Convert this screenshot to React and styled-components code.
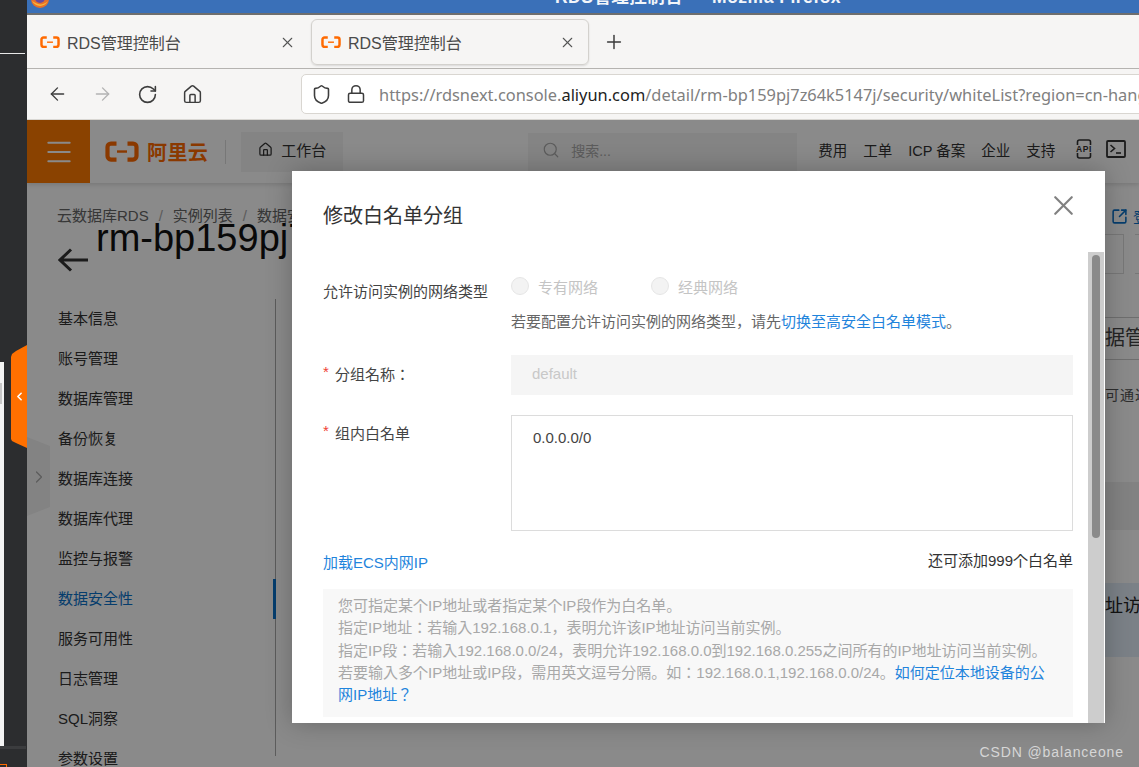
import styled, { createGlobalStyle } from "styled-components";
import {
  ArrowLeft,
  ArrowRight,
  ChevronLeft,
  ChevronRight,
  Home,
  Lock,
  Menu,
  Plus,
  RotateCw,
  Search,
  Shield,
  SquareArrowOutUpRight,
  X,
} from "lucide-react";

const GlobalStyle = createGlobalStyle`
  html, body {
    margin: 0;
    padding: 0;
    background: #2c2d2f;
    overflow: hidden;
  }
  * {
    box-sizing: border-box;
  }
  body {
    font-family: "Liberation Sans", "Noto Sans CJK JP", sans-serif;
  }
`;

const Screen = styled.div`
  position: relative;
  display: flex;
  width: 1139px;
  height: 767px;
  overflow: hidden;
`;

/* desktop strip left of the browser */
const DesktopStrip = styled.div`
  position: relative;
  width: 27px;
  flex: none;
  background: #2c2d2f;
`;

const StripLine = styled.div`
  position: absolute;
  left: 0;
  top: 53px;
  width: 25px;
  height: 1px;
  background: #e8e8e8;
`;

const StripPanel = styled.div`
  position: absolute;
  left: 0;
  top: 362px;
  width: 4px;
  height: 384px;
  background: #f4f4f4;
`;

const StripPanelMark = styled.div`
  position: absolute;
  left: 0;
  top: 21px;
  width: 2px;
  height: 21px;
  background: #c8c8c8;
`;

const StripFoot = styled.div`
  position: absolute;
  left: 0;
  top: 746px;
  width: 26px;
  height: 3px;
  background: #3b3c3e;
`;

const StripBadge = styled.div`
  position: absolute;
  left: -3px;
  top: 764px;
  width: 10px;
  height: 10px;
  border: 1px solid #ff6a00;
`;

const Browser = styled.div`
  flex: 1;
  min-width: 0;
  display: flex;
  flex-direction: column;
`;

const TitleBar = styled.div`
  position: relative;
  height: 15px;
  flex: none;
  display: flex;
  justify-content: center;
  align-items: flex-end;
  background: #3a70b8;
  border-bottom: 2px solid #6e6e6e;
  overflow: hidden;
`;

const TitleText = styled.div`
  height: 20px;
  line-height: 20px;
  margin-left: 230px;
  margin-bottom: 6px;
  flex: none;
  font-size: 17.5px;
  font-weight: 700;
  color: #f2f5fa;
  letter-spacing: 0.5px;
  white-space: nowrap;
`;

const FoxIcon = styled.svg`
  position: absolute;
  left: 4px;
  top: -10px;
`;

const TabBar = styled.div`
  height: 54px;
  flex: none;
  display: flex;
  align-items: center;
  background: #f6f5f4;
  border-bottom: 1px solid #b5b3b0;
`;

const Tab = styled.div`
  width: ${(p) => p.$width}px;
  height: 46px;
  margin-top: 1px;
  flex: none;
  display: flex;
  align-items: center;
  padding-left: ${(p) => p.$left}px;
  padding-right: ${(p) => p.$right}px;
  border-radius: 6px;
  border: 1px solid ${(p) => (p.$active ? "#d3d1cd" : "transparent")};
  box-shadow: ${(p) => (p.$active ? "0 1px 2px rgba(0,0,0,.12)" : "none")};
`;

const TabTitle = styled.span`
  flex: 1;
  margin-left: 7px;
  font-size: 16px;
  color: #4a4a4a;
  white-space: nowrap;
`;

const TabClose = styled(X)`
  color: #555;
`;

const NewTab = styled(Plus)`
  margin-left: 14px;
  color: #3a3a3a;
`;

const NavBar = styled.div`
  height: 51px;
  flex: none;
  display: flex;
  align-items: center;
  padding-left: 20px;
  background: #f6f5f4;
  border-bottom: 1px solid #d9d7d3;
  overflow: hidden;
`;

const NavButton = styled.div`
  width: 21px;
  height: 24px;
  margin-right: ${(p) => p.$gap || 24}px;
  flex: none;
  display: flex;
  align-items: center;
  justify-content: center;
  color: ${(p) => (p.$disabled ? "#b3b3b3" : "#3d3d3d")};
`;

const AddressBox = styled.div`
  width: 900px;
  height: 40px;
  margin-left: 74px;
  flex: none;
  display: flex;
  align-items: center;
  padding-left: 9px;
  background: #fff;
  border: 1px solid #d9d6d1;
  border-radius: 5px;
  color: #3d3d3d;
`;

const LockIcon = styled(Lock)`
  margin-left: 14px;
  margin-right: 13px;
  flex: none;
`;

const Url = styled.span`
  font-family: "Noto Sans", sans-serif;
  font-size: 16.4px;
  color: #808080;
  white-space: nowrap;
  b {
    font-weight: 400;
    color: #222;
  }
`;

const Page = styled.div`
  position: relative;
  flex: 1;
  min-height: 0;
  display: flex;
  flex-direction: column;
  background: #fff;
  overflow: hidden;
`;

const ConsoleBar = styled.div`
  height: 63px;
  flex: none;
  display: flex;
  align-items: center;
  background: #fff;
  box-shadow: 0 2px 4px rgba(0, 0, 0, 0.12);
`;

const MenuButton = styled.div`
  width: 63px;
  height: 63px;
  flex: none;
  display: flex;
  align-items: center;
  justify-content: center;
  background: #ff7a00;
  color: #fff;
`;

const Brand = styled.div`
  margin-left: 15px;
  display: flex;
  align-items: center;
  gap: 8px;
  color: #ff6a00;
`;

const BrandName = styled.span`
  font-size: 20px;
  font-weight: 700;
  letter-spacing: 0.4px;
`;

const BarDivider = styled.div`
  width: 1px;
  height: 24px;
  margin-left: 17px;
  background: #ddd;
`;

const Workbench = styled.div`
  width: 102px;
  height: 40px;
  margin-left: 15px;
  display: flex;
  align-items: center;
  justify-content: center;
  gap: 8px;
  padding: 0 0 4px 0;
  background: #f4f4f4;
  font-size: 15px;
  color: #333;
`;

const SearchBox = styled.div`
  width: 269px;
  height: 38px;
  margin-left: 185px;
  display: flex;
  align-items: center;
  padding: 0 0 3px 14px;
  gap: 11px;
  background: #f4f4f4;
  font-size: 14px;
  color: #aaa;
`;

const BarLinks = styled.div`
  margin-left: 21px;
  margin-bottom: 5px;
  display: flex;
  align-items: center;
  gap: 16px;
  font-size: 14.5px;
  color: #333;
  white-space: nowrap;
`;

const BarIcons = styled.div`
  margin-left: 3px;
  display: flex;
  align-items: center;
  gap: 12px;
`;

const Content = styled.div`
  flex: 1;
  min-height: 0;
  display: flex;
  padding-left: 30px;
`;

const SideColumn = styled.div`
  width: 219px;
  flex: none;
`;

const Breadcrumb = styled.div`
  margin-top: 24px;
  height: 18px;
  line-height: 18px;
  font-size: 15px;
  color: #666;
  white-space: nowrap;
  span {
    margin: 0 10px;
    color: #aaa;
  }
`;

const Heading = styled.div`
  display: flex;
  align-items: flex-start;
  height: 74px;
`;

const BackArrow = styled.svg`
  margin-top: 23px;
  margin-left: 1px;
  flex: none;
  color: #333;
`;

const InstanceName = styled.div`
  margin-left: 8px;
  margin-top: -9px;
  width: 260px;
  font-size: 38px;
  line-height: 44px;
  color: #111;
  white-space: nowrap;
`;

const SideMenu = styled.div`
  position: relative;
  width: 219px;
  height: 457px;
  padding-top: 0;
  border-right: 1px solid #aaa;
`;

const SideItem = styled.div`
  position: relative;
  height: 40px;
  line-height: 40px;
  padding-left: 1px;
  font-size: 15px;
  color: ${(p) => (p.$active ? "#0a72c9" : "#333")};
  white-space: nowrap;
  &::after {
    content: "";
    display: ${(p) => (p.$active ? "block" : "none")};
    position: absolute;
    right: -1px;
    top: 0;
    width: 3px;
    height: 40px;
    background: #0a72c9;
  }
`;

const MainColumn = styled.div`
  flex: 1;
  min-width: 0;
  overflow: hidden;
  display: flex;
  flex-direction: column;
  align-items: flex-end;
`;

const OpenLink = styled.div`
  margin-top: 24px;
  width: 28px;
  height: 18px;
  display: flex;
  align-items: center;
  gap: 5px;
  color: #0a72c9;
  font-size: 14px;
  overflow: hidden;
  white-space: nowrap;
`;

const StatRow = styled.div`
  margin-top: 9px;
  width: 34px;
  display: flex;
  gap: 11px;
  overflow: hidden;
`;

const StatBox = styled.div`
  width: 19px;
  height: 40px;
  flex: none;
  border: 1px solid #ddd;
  border-left: none;
`;

const TabStrip = styled.div`
  margin-top: 43px;
  width: 34px;
  height: 43px;
  line-height: 41px;
  border-top: 1px solid #ccc;
  border-bottom: 1px solid #ccc;
  font-size: 20px;
  color: #444;
  overflow: hidden;
  white-space: nowrap;
`;

const TabNote = styled.div`
  margin-top: 25px;
  width: 34px;
  font-size: 14px;
  line-height: 20px;
  letter-spacing: 1px;
  color: #555;
  overflow: hidden;
  white-space: nowrap;
`;

const GreyBand = styled.div`
  margin-top: 77px;
  width: 34px;
  height: 48px;
  background: #f0f0f0;
`;

const BlueBand = styled.div`
  margin-top: 53px;
  width: 34px;
  height: 74px;
  padding-top: 12px;
  background: #e4eefa;
  font-size: 18px;
  line-height: 22px;
  color: #222;
  overflow: hidden;
  white-space: nowrap;
`;

const OrangeTab = styled.div`
  position: absolute;
  left: 11px;
  top: 345px;
  width: 16px;
  height: 103px;
  z-index: 5;
  display: flex;
  align-items: center;
  justify-content: center;
  background: #ff7000;
  clip-path: polygon(0 12px, 1px 9px, 5px 6px, 100% 0, 100% 100%, 5px 98px, 1px 96px, 0 94px);
  color: #fff;
`;

const FoldTab = styled.div`
  position: absolute;
  left: 27px;
  top: 437px;
  width: 23px;
  height: 79px;
  z-index: 1;
  display: flex;
  align-items: center;
  justify-content: center;
  background: #f2f2f2;
  clip-path: polygon(0 0, 100% 9px, 100% 70px, 0 100%);
  color: #aaa;
`;

const Mask = styled.div`
  position: absolute;
  inset: 0;
  z-index: 2;
  background: rgba(0, 0, 0, 0.46);
`;

const Modal = styled.div`
  position: absolute;
  left: 265px;
  top: 51px;
  z-index: 3;
  width: 813px;
  height: 552px;
  display: flex;
  flex-direction: column;
  background: #fff;
  box-shadow: 0 0 24px rgba(0, 0, 0, 0.25);
`;

const ModalHeader = styled.div`
  height: 81px;
  flex: none;
  display: flex;
  justify-content: space-between;
  padding: 33px 25px 0 31px;
`;

const ModalTitle = styled.div`
  font-size: 20px;
  line-height: 24px;
  color: #333;
`;

const ModalClose = styled(X)`
  margin-top: -15px;
  color: #808080;
`;

const ModalBody = styled.div`
  flex: 1;
  min-height: 0;
  display: flex;
  padding-right: 1px;
`;

const Scroller = styled.div`
  flex: 1;
  min-width: 0;
  padding: 0 15px 0 31px;
  overflow: hidden;
`;

const Track = styled.div`
  width: 16px;
  flex: none;
  padding: 3px 4px 0;
  background: #cdcdcd;
`;

const Thumb = styled.div`
  height: 283px;
  border-radius: 4px;
  background: #8a8a8a;
`;

const FormRow = styled.div`
  display: grid;
  grid-template-columns: 188px 1fr;
  margin-bottom: ${(p) => p.$gap || 0}px;
`;

const Label = styled.div`
  font-size: 15px;
  line-height: 20px;
  padding-top: ${(p) => p.$top || 0}px;
  color: #444;
  white-space: nowrap;
  i {
    font-style: normal;
    display: inline-block;
    width: 12px;
    line-height: 1;
    vertical-align: 3px;
    color: #f04134;
  }
`;

const RadioRow = styled.div`
  display: flex;
  align-items: center;
  height: 20px;
  margin-top: 24px;
`;

const RadioOption = styled.div`
  width: 140px;
  display: flex;
  align-items: center;
  gap: 9px;
  font-size: 15px;
  color: #c4c4c4;
  white-space: nowrap;
`;

const RadioDot = styled.span`
  width: 18px;
  height: 18px;
  flex: none;
  border-radius: 50%;
  background: #f3f3f3;
  border: 1px solid #e6e6e6;
`;

const Hint = styled.div`
  margin-top: 16px;
  font-size: 15px;
  line-height: 20px;
  color: #666;
  white-space: nowrap;
`;

const BlueLink = styled.a`
  color: #1f84dc;
`;

const ReadonlyInput = styled.div`
  height: 40px;
  padding-left: 21px;
  line-height: 38px;
  background: #f5f5f5;
  font-size: 15px;
  color: #c8c8c8;
`;

const IpArea = styled.div`
  height: 116px;
  padding: 13px 21px;
  border: 1px solid #dcdcdc;
  font-size: 15px;
  line-height: 18px;
  color: #444;
`;

const AreaFoot = styled.div`
  display: flex;
  justify-content: space-between;
  align-items: center;
  margin-top: 22px;
  height: 20px;
  font-size: 15px;
  line-height: 20px;
  white-space: nowrap;
`;

const RemainText = styled.span`
  margin-top: -4px;
  font-size: 15px;
  color: #333;
`;

const NoteBox = styled.div`
  margin-top: 16px;
  padding: 6px 15px 11px;
  background: #f8f8f8;
  font-size: 15px;
  line-height: 22.3px;
  color: #a8a8a8;
`;

const Watermark = styled.div`
  position: absolute;
  right: 15px;
  bottom: 6px;
  z-index: 6;
  font-size: 14px;
  line-height: 18px;
  letter-spacing: 0.9px;
  color: #d6d6d6;
`;

const AliMark = ({ size = 20, color = "#ff6a00" }) => (
  <svg width={size} height={size * 0.62} viewBox="0 0 34 21" fill="none" style={{ flex: "none" }}>
    <path
      d="M11.500 2.500H6C4 2.500 2.500 4 2.500 6v9c0 2 1.500 3.500 3.500 3.500h5.500M22.500 2.500H28c2 0 3.500 1.500 3.500 3.500v9c0 2-1.500 3.500-3.500 3.500h-5.500"
      stroke={color}
      strokeWidth="4.200"
    />
    <path d="M12 10.500h10" stroke={color} strokeWidth="2.400" />
  </svg>
);

const ApiIcon = () => (
  <svg width="20" height="20" viewBox="0 0 20 20" fill="none">
    <path
      d="M3.500 6V3C3.500 1.800 4.300 1 5.500 1h9c1.200 0 2 .8 2 2v3M3.500 14v3c0 1.200.8 2 2 2h9c1.200 0 2-.8 2-2v-3"
      stroke="#333"
      strokeWidth="1.600"
    />
    <text x="10" y="13" textAnchor="middle" fontSize="8.500" fontWeight="700" letterSpacing="0.6" fill="#333" fontFamily="Liberation Sans">
      API
    </text>
  </svg>
);

const TerminalIcon = () => (
  <svg width="20" height="18" viewBox="0 0 20 18" fill="none" stroke="#333">
    <rect x="1" y="1" width="18" height="16" rx="1" strokeWidth="1.800" />
    <path d="M4.500 5l4 3.500-4 3.500" strokeWidth="1.600" />
    <path d="M10 13h5" strokeWidth="1.600" />
  </svg>
);

const menuItems = [
  "基本信息",
  "账号管理",
  "数据库管理",
  "备份恢复",
  "数据库连接",
  "数据库代理",
  "监控与报警",
  "数据安全性",
  "服务可用性",
  "日志管理",
  "SQL洞察",
  "参数设置",
];

export default function App() {
  return (
    <Screen>
      <GlobalStyle />
      <DesktopStrip>
        <StripLine />
        <StripPanel>
          <StripPanelMark />
        </StripPanel>
        <StripFoot />
        <StripBadge />
      </DesktopStrip>

      <Browser>
        <TitleBar>
          <FoxIcon width="18" height="18" viewBox="0 0 18 18">
            <circle cx="9" cy="9" r="9" fill="#e8702a" />
            <circle cx="9" cy="8" r="5" fill="#6a4a9c" />
            <path d="M1 11c3 6 12 7 16 0-3 3-7 4-10 3-3-1-4-2-6-3z" fill="#f6b73c" />
          </FoxIcon>
          <TitleText>RDS管理控制台 — Mozilla Firefox</TitleText>
        </TitleBar>

        <TabBar>
          <Tab $width={284} $left={12} $right={14}>
            <AliMark size={20} />
            <TabTitle>RDS管理控制台</TabTitle>
            <TabClose size={17} strokeWidth={1.5} />
          </Tab>
          <Tab $active $width={278} $left={9} $right={12}>
            <AliMark size={20} />
            <TabTitle>RDS管理控制台</TabTitle>
            <TabClose size={17} strokeWidth={1.5} />
          </Tab>
          <NewTab size={22} strokeWidth={1.6} />
        </TabBar>

        <NavBar>
          <NavButton>
            <ArrowLeft size={22} strokeWidth={1.6} />
          </NavButton>
          <NavButton $disabled>
            <ArrowRight size={22} strokeWidth={1.6} />
          </NavButton>
          <NavButton>
            <RotateCw size={21} strokeWidth={1.8} />
          </NavButton>
          <NavButton $gap={24}>
            <Home size={21} strokeWidth={1.7} />
          </NavButton>
          <AddressBox>
            <Shield size={21} strokeWidth={1.8} />
            <LockIcon size={20} strokeWidth={1.8} />
            <Url>
              https://rdsnext.console.<b>aliyun.com</b>/detail/rm-bp159pj7z64k5147j/security/whiteList?region=cn-hangzhou
            </Url>
          </AddressBox>
        </NavBar>

        <Page>
          <ConsoleBar>
            <MenuButton>
              <Menu size={32} strokeWidth={1.5} />
            </MenuButton>
            <Brand>
              <AliMark size={34} />
              <BrandName>阿里云</BrandName>
            </Brand>
            <BarDivider />
            <Workbench>
              <Home size={15} strokeWidth={2} />
              工作台
            </Workbench>
            <SearchBox>
              <Search size={18} strokeWidth={1.6} />
              搜索...
            </SearchBox>
            <BarLinks>
              <span>费用</span>
              <span>工单</span>
              <span>ICP 备案</span>
              <span>企业</span>
              <span>支持</span>
              <BarIcons>
                <ApiIcon />
                <TerminalIcon />
              </BarIcons>
            </BarLinks>
          </ConsoleBar>

          <Content>
            <SideColumn>
              <Breadcrumb>
                云数据库RDS<span>/</span>实例列表<span>/</span>数据安全性
              </Breadcrumb>
              <Heading>
                <BackArrow width="30" height="24" viewBox="0 0 30 24" fill="none" stroke="currentColor" strokeWidth="3">
                  <path d="M30 12H2M13 1.500 2 12l11 10.500" />
                </BackArrow>
                <InstanceName>rm-bp159pj7z64k5147j</InstanceName>
              </Heading>
              <SideMenu>
                {menuItems.map((item) => (
                  <SideItem key={item} $active={item === "数据安全性"}>
                    {item}
                  </SideItem>
                ))}
              </SideMenu>
            </SideColumn>
            <MainColumn>
              <OpenLink>
                <SquareArrowOutUpRight size={17} strokeWidth={2.2} style={{ flex: "none" }} />
                登录数据库
              </OpenLink>
              <StatRow>
                <StatBox />
                <StatBox />
              </StatRow>
              <TabStrip>据管理</TabStrip>
              <TabNote>可通过</TabNote>
              <GreyBand />
              <BlueBand>址访问</BlueBand>
            </MainColumn>
          </Content>

          <Mask />

          <Modal>
            <ModalHeader>
              <ModalTitle>修改白名单分组</ModalTitle>
              <ModalClose size={33} strokeWidth={1.6} />
            </ModalHeader>
            <ModalBody>
              <Scroller>
                <FormRow $gap={23}>
                  <Label $top={30}>允许访问实例的网络类型</Label>
                  <div>
                    <RadioRow>
                      <RadioOption>
                        <RadioDot />
                        专有网络
                      </RadioOption>
                      <RadioOption>
                        <RadioDot />
                        经典网络
                      </RadioOption>
                    </RadioRow>
                    <Hint>
                      若要配置允许访问实例的网络类型，请先<BlueLink>切换至高安全白名单模式</BlueLink>。
                    </Hint>
                  </div>
                </FormRow>
                <FormRow $gap={20}>
                  <Label $top={9}>
                    <i>*</i>分组名称：
                  </Label>
                  <ReadonlyInput>default</ReadonlyInput>
                </FormRow>
                <FormRow>
                  <Label $top={8}>
                    <i>*</i>组内白名单
                  </Label>
                  <IpArea>0.0.0.0/0</IpArea>
                </FormRow>
                <AreaFoot>
                  <BlueLink>加载ECS内网IP</BlueLink>
                  <RemainText>还可添加999个白名单</RemainText>
                </AreaFoot>
                <NoteBox>
                  您可指定某个IP地址或者指定某个IP段作为白名单。
                  <br />
                  指定IP地址：若输入192.168.0.1，表明允许该IP地址访问当前实例。
                  <br />
                  指定IP段：若输入192.168.0.0/24，表明允许192.168.0.0到192.168.0.255之间所有的IP地址访问当前实例。
                  <br />
                  若要输入多个IP地址或IP段，需用英文逗号分隔。如：192.168.0.1,192.168.0.0/24。
                  <BlueLink>如何定位本地设备的公网IP地址？</BlueLink>
                </NoteBox>
              </Scroller>
              <Track>
                <Thumb />
              </Track>
            </ModalBody>
          </Modal>

          <Watermark>CSDN @balanceone</Watermark>
        </Page>
      </Browser>

      <OrangeTab>
        <ChevronLeft size={13} strokeWidth={3} />
      </OrangeTab>
      <FoldTab>
        <ChevronRight size={20} strokeWidth={1.5} />
      </FoldTab>
    </Screen>
  );
}
